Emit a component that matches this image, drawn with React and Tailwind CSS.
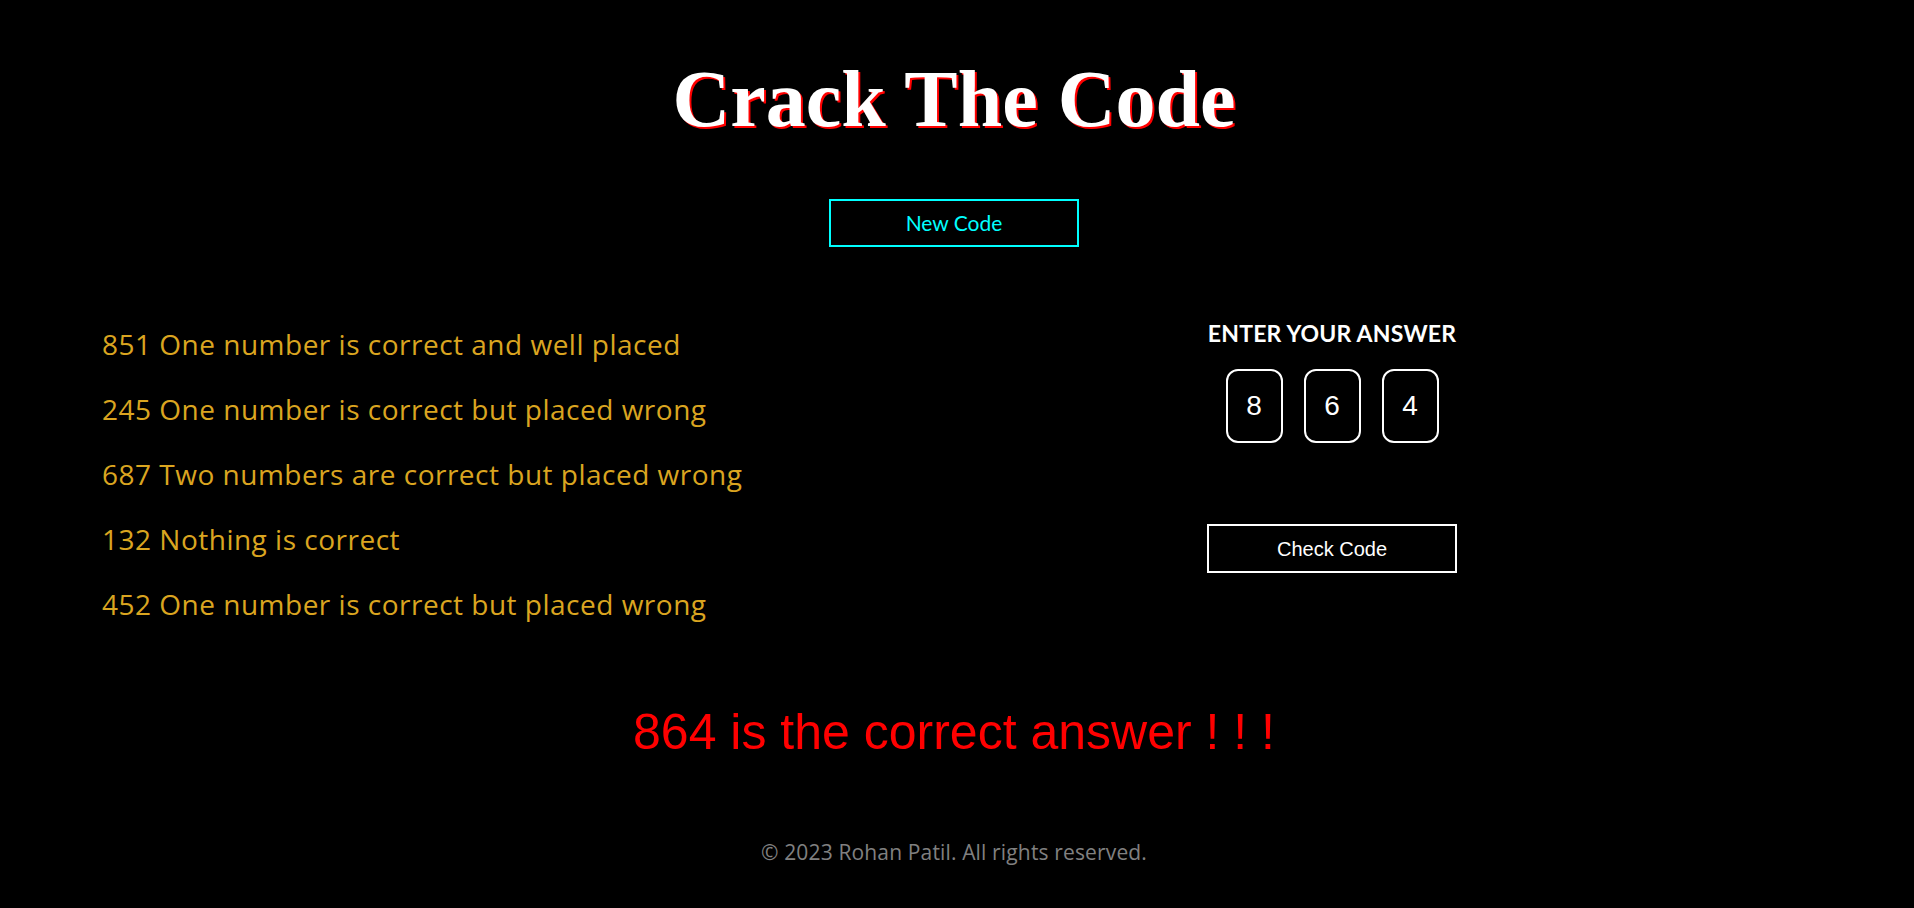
import React, { useState } from "react";

const clues = [
  "851 One number is correct and well placed",
  "245 One number is correct but placed wrong",
  "687 Two numbers are correct but placed wrong",
  "132 Nothing is correct",
  "452 One number is correct but placed wrong",
];

const App = () => {
  const [digits, setDigits] = useState(["8", "6", "4"]);
  const [message, setMessage] = useState("864 is the correct answer ! ! !");

  const setDigit = (i, v) => {
    const next = [...digits];
    next[i] = v.slice(-1);
    setDigits(next);
  };

  const checkCode = () => {
    const guess = digits.join("");
    setMessage(guess === "864" ? "864 is the correct answer ! ! !" : `${guess} is wrong, try again`);
  };

  return (
    <div className="min-h-screen bg-black text-white">
      <div className="pr-[6px] flex flex-col items-center">
        {/* Title */}
        <h1 className="pt-[59px] text-[80px] leading-[80px] font-bold font-['Liberation_Serif',serif] [text-shadow:2px_2px_0_#ff0000]">
          Crack The Code
        </h1>

        <button className="mt-[60px] w-[250px] h-[48px] border-2 border-[#00ffff] text-[#00ffff] text-[21px] bg-black font-['Lato',sans-serif]">
          New Code
        </button>

        {/* Clues + answer */}
        <div className="mt-[65px] w-full flex">
          <div className="pl-[102px] w-[1207px] shrink-0 text-[#daa520] text-[28px] leading-[65px] tracking-[0.5px] font-['Open_Sans',sans-serif]">
            {clues.map((c) => (
              <p key={c}>{c}</p>
            ))}
          </div>

          <div className="w-[250px] flex flex-col items-center">
            <h2 className="mt-[10px] text-[23px] leading-[23px] font-bold whitespace-nowrap font-['Lato',sans-serif] tracking-[0.2px]">
              ENTER YOUR ANSWER
            </h2>
            <div className="mt-[24px] flex gap-[21px]">
              {digits.map((d, i) => (
                <input
                  key={i}
                  value={d}
                  onChange={(e) => setDigit(i, e.target.value)}
                  className="w-[57px] h-[74px] rounded-[12px] border-2 border-white bg-black text-white text-center text-[28px] outline-none font-['Liberation_Sans',sans-serif]"
                />
              ))}
            </div>
            <button
              onClick={checkCode}
              className="mt-[81px] w-[250px] h-[49px] border-2 border-white text-white text-[20px] bg-black font-['Liberation_Sans',sans-serif]"
            >
              Check Code
            </button>
          </div>
        </div>

        {/* Result */}
        <p className="mt-[70px] text-[50px] leading-[50px] text-[#ff0000] font-['Liberation_Sans',sans-serif]">
          {message}
        </p>

        <footer className="mt-[85px] text-[21px] leading-[21px] tracking-[0.15px] text-[#808080] font-['Open_Sans',sans-serif]">
          © 2023 Rohan Patil. All rights reserved.
        </footer>
      </div>
    </div>
  );
};

export default App;
